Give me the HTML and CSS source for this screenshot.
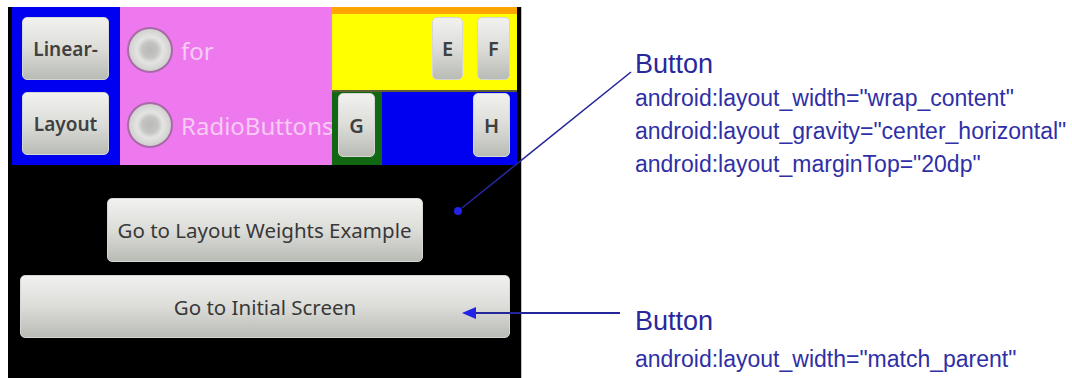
FILE: index.html
```html
<!DOCTYPE html>
<html lang="en">
<head>
    <meta charset="UTF-8">
    <meta name="viewport" content="width=device-width, initial-scale=1.0">
    <title>Button layout attributes</title>
    <link rel="stylesheet" href="styles.css">
</head>
<body>
    <div class="figure">
        <div class="phone">
            <div class="screen">
                <div class="top">
                    <div class="col-blue">
                        <button class="btn btn-small">Linear-</button>
                        <button class="btn btn-small">Layout</button>
                    </div>
                    <div class="col-pink">
                        <label class="radio"><span class="radio-dot"></span>for</label>
                        <label class="radio"><span class="radio-dot"></span>RadioButtons</label>
                    </div>
                    <div class="col-grid">
                        <div class="row-yellow">
                            <button class="btn btn-letter btn-e">E</button>
                            <button class="btn btn-letter btn-f">F</button>
                        </div>
                        <div class="row-bottom">
                            <div class="cell-green">
                                <button class="btn btn-letter">G</button>
                            </div>
                            <div class="cell-blue">
                                <button class="btn btn-letter">H</button>
                            </div>
                        </div>
                    </div>
                </div>
                <button class="btn btn-wide">Go to Layout Weights Example</button>
                <button class="btn btn-full">Go to Initial Screen</button>
            </div>
        </div>

        <div class="notes">
            <div class="note">
                <div class="note-title">Button</div>
                <div class="note-line">android:layout_width="wrap_content"</div>
                <div class="note-line">android:layout_gravity="center_horizontal"</div>
                <div class="note-line">android:layout_marginTop="20dp"</div>
            </div>
            <div class="note note-bottom">
                <div class="note-title">Button</div>
                <div class="note-line">android:layout_width="match_parent"</div>
            </div>
        </div>

        <!-- callout arrows drawn over the screenshot -->
        <svg class="arrows" width="1072" height="378" viewBox="0 0 1072 378">
            <line x1="631" y1="72" x2="462" y2="208" stroke="#25259a" stroke-width="1.6"/>
            <circle cx="458" cy="211" r="4" fill="#2323e8"/>
            <line x1="620" y1="313" x2="472" y2="313" stroke="#25259a" stroke-width="1.8"/>
            <polygon points="462,313 476,307 476,319" fill="#2323e8"/>
        </svg>
    </div>
</body>
</html>
```

FILE: styles.css
```css
body {
    margin: 0;
    background-color: #fff;
}
.figure {
    position: relative;
    width: 1072px;
    height: 378px;
    display: flex;
    overflow: hidden;
}

/* phone screenshot */
.phone {
    margin: 7px 0 0 8px;
    width: 514px;
    height: 380px;
    padding: 0 4px;
    box-sizing: border-box;
    background-color: #000;
    border-right: 1px solid #c4c4c4;
}
.screen {
    display: flex;
    flex-direction: column;
}
.top {
    display: flex;
    height: 158px;
}
.btn {
    font-family: "Noto Sans", "Open Sans", sans-serif;
    color: #383838;
    background: linear-gradient(#f1f1ef, #dcddd9 50%, #b9bbb5);
    border: 1px solid #d6d7d3;
    border-radius: 5px;
    padding: 0;
    box-sizing: border-box;
}
.col-blue {
    width: 108px;
    background-color: #0000f0;
    padding: 10px 0 0 10px;
    box-sizing: border-box;
    display: flex;
    flex-direction: column;
    gap: 12px;
}
.btn-small {
    width: 87px;
    height: 63px;
    font-size: 19px;
    font-weight: 600;
    color: #404040;
}
.col-pink {
    width: 212px;
    background-color: #ee78ee;
    padding: 20px 0 0 7px;
    box-sizing: border-box;
    overflow: hidden;
    display: flex;
    flex-direction: column;
    gap: 29px;
}
.radio {
    display: flex;
    align-items: center;
    gap: 8px;
    font-family: "Noto Sans", "Open Sans", sans-serif;
    font-size: 24px;
    color: #f7cbf4;
    white-space: nowrap;
}
.radio-dot {
    flex: none;
    width: 46px;
    height: 46px;
    border-radius: 50%;
    box-sizing: border-box;
    border: 2px solid #a86aa6;
    background: radial-gradient(circle, #b9b9b7 0, #c4c4c2 8px, #d2d2d0 10px, #e4e4e2 13px, #d0d0ce 21px);
}
.col-grid {
    width: 185px;
    display: flex;
    flex-direction: column;
}
.row-yellow {
    height: 85px;
    background-color: #ffff00;
    border-top: 7px solid #ffa400;
    border-bottom: 2px solid #5e5e2e;
    box-sizing: border-box;
    display: flex;
    justify-content: flex-end;
    align-items: flex-start;
    gap: 14px;
    padding: 3px 7px 0 0;
}
.btn-letter {
    width: 37px;
    height: 64px;
    font-size: 20px;
    font-weight: 600;
    color: #404040;
}
.btn-e {
    width: 31px;
    height: 63px;
}
.btn-f {
    width: 33px;
    height: 63px;
}
.row-bottom {
    height: 73px;
    display: flex;
}
.cell-green {
    width: 50px;
    background-color: #126812;
    padding: 1px 0 0 6px;
    box-sizing: border-box;
}
.cell-blue {
    flex: 1;
    background-color: #0000f0;
    display: flex;
    justify-content: flex-end;
    align-items: flex-start;
    padding: 1px 7px 0 0;
}
.btn-wide {
    align-self: center;
    margin-top: 33px;
    width: 316px;
    height: 64px;
    font-size: 20.5px;
}
.btn-full {
    margin: 13px 7px 0 8px;
    height: 63px;
    font-size: 20.5px;
}

/* annotations */
.notes {
    margin-left: 113px;
    padding-top: 46px;
    font-family: "Liberation Sans", Arial, sans-serif;
    color: #2f2fa6;
}
.note-title {
    font-size: 27px;
    line-height: 36px;
    color: #28289c;
}
.note-line {
    font-size: 23px;
    line-height: 33px;
}
.note-bottom {
    margin-top: 122px;
}
.note-bottom .note-line {
    margin-top: 4px;
}
.arrows {
    position: absolute;
    top: 0;
    left: 0;
    pointer-events: none;
}
```
